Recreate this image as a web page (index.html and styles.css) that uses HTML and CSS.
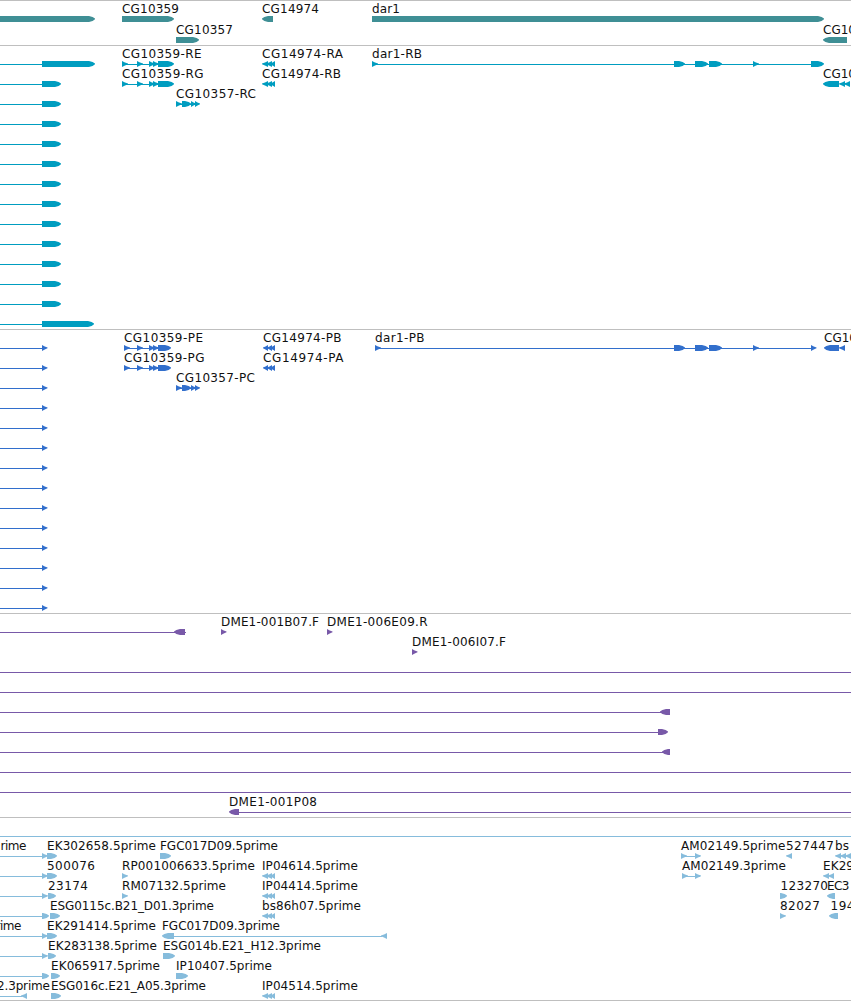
FILE: index.html
```html
<!DOCTYPE html>
<html lang="en">
<head>
    <meta charset="UTF-8">
    <title>Genome browser</title>
    <link rel="stylesheet" href="styles.css">
</head>
<body>
    <main class="browser">
        <section class="track track-genes"><svg id="genes"></svg></section>
        <section class="track track-transcripts"><svg id="transcripts"></svg></section>
        <section class="track track-proteins"><svg id="proteins"></svg></section>
        <section class="track track-clones"><svg id="clones"></svg></section>
        <section class="track track-ests"><svg id="ests"></svg></section>
    </main>
    <script src="tracks.js"></script>
</body>
</html>
```
FILE: styles.css
```css
* {
    box-sizing: border-box;
    margin: 0;
    padding: 0;
}

body {
    background-color: #fff;
    font-family: "DejaVu Sans", sans-serif;
    font-size: 12px;
    overflow: hidden;
}

.browser {
    display: flex;
    flex-direction: column;
    width: 851px;
    border-bottom: 1px solid #bfbfbf;
}

.track {
    border-top: 1px solid #bfbfbf;
    overflow: hidden;
}

.track svg {
    display: block;
    width: 100%;
    height: 100%;
}

.track text {
    fill: #111;
}

.track-genes {
    height: 45px;
    color: #3f8f95;
}

.track-transcripts {
    height: 284px;
    color: #009dc0;
}

.track-proteins {
    height: 284px;
    color: #326fcc;
}

.track-clones {
    height: 204px;
    color: #7859a8;
}

.track-ests {
    height: 183px;
    color: #86bcdc;
}

.line,
.feature {
    fill: currentColor;
}
```
FILE: tracks.js
```js
const NS = 'http://www.w3.org/2000/svg';

function add(svg, tag, attrs, text) {
    const el = document.createElementNS(NS, tag);
    for (const key in attrs) el.setAttribute(key, attrs[key]);
    if (text) el.textContent = text;
    svg.appendChild(el);
}

// feature: [start, end, strand], strand '-' points left
function drawFeature(svg, y, [a, b, strand]) {
    const small = b - a <= 6;
    const head = small ? b - a : 6;
    // wider features get a blunter head
    const bulge = small ? 1.6 : 2;
    const knee = small ? head * 0.5 : head * 0.4;
    const top = y - 3, bottom = y + 3, tip = y - 0.2;
    const dir = strand === '-' ? -1 : 1;
    const back = dir === 1 ? a : b;
    const front = dir === 1 ? b : a;
    const points = [
        [back, top],
        [front - dir * head, top],
        [front - dir * knee, y - bulge],
        [front, tip - 0.4],
        [front, tip + 0.4],
        [front - dir * knee, y + bulge],
        [front - dir * head, bottom],
        [back, bottom]
    ];
    add(svg, 'polygon', { class: 'feature', points: points.map(p => p.join(',')).join(' ') });
}

function drawRow(svg, y, row) {
    (row.lines || []).forEach(([a, b]) =>
        add(svg, 'rect', { class: 'line', x: a, y: y, width: b - a, height: 1 }));
    (row.features || []).forEach(f => drawFeature(svg, y, f));
    // label: [x, text, width]
    (row.labels || []).forEach(([x, text, width]) =>
        add(svg, 'text', { x: x, y: y - 6, textLength: width }, text));
}

function drawTrack(id, first, step, rows) {
    const svg = document.getElementById(id);
    rows.forEach((row, i) => drawRow(svg, first + i * step, row));
}

const full = [0, 851];

drawTrack('genes', 18, 21, [
    {
        features: [[0, 95], [122, 174], [262, 273, '-'], [372, 824]],
        labels: [[122, 'CG10359', 57], [262, 'CG14974', 57], [372, 'dar1', 28]]
    },
    {
        features: [[176, 199], [823, 847, '-']],
        labels: [[176, 'CG10357', 57], [823, 'CG10', 33]]
    }
]);

const cg10359 = [[122, 128], [137, 143], [149, 155], [153, 159], [158, 174]];
const cg10357 = [[176, 182], [182, 191], [191, 196], [195, 200]];
const cg14974 = [[262, 268, '-'], [266, 272, '-'], [270, 275, '-']];
const dar1 = [[674, 685], [695, 708], [709, 722], [753, 759]];

const transcripts = [];
for (let i = 0; i < 14; i++) {
    const end = i === 0 ? 95 : i === 13 ? 94 : 61;
    transcripts.push({ lines: [[0, 42]], features: [[42, end]], labels: [] });
}
transcripts[0].lines.push([122, 158], [372, 811]);
transcripts[0].features.push(...cg10359, ...cg14974, [372, 378], ...dar1, [811, 824]);
transcripts[0].labels.push([122, 'CG10359-RE', 79.5], [262, 'CG14974-RA', 81], [372, 'dar1-RB', 50]);
transcripts[1].lines.push([122, 158]);
transcripts[1].features.push(...cg10359, ...cg14974, [823, 839, '-'], [839, 845, '-'], [844, 850, '-']);
transcripts[1].labels.push([122, 'CG10359-RG', 81.5], [262, 'CG14974-RB', 79], [823, 'CG10', 33]);
transcripts[2].lines.push([176, 198]);
transcripts[2].features.push(...cg10357);
transcripts[2].labels.push([176, 'CG10357-RC', 80]);
drawTrack('transcripts', 18, 20, transcripts);

const cg10359p = [[124, 130], [137, 143], [149, 155], [153, 159], [158, 171]];
const cg14974p = [[263, 268, '-'], [267, 272, '-'], [270, 275, '-']];

const proteins = [];
for (let i = 0; i < 14; i++) {
    proteins.push({ lines: [[0, 42]], features: [[42, 47.5]], labels: [] });
}
proteins[0].lines.push([124, 158], [375, 811]);
proteins[0].features.push(...cg10359p, ...cg14974p, [375, 381], ...dar1, [811, 816.5], [824, 839, '-'], [839, 845, '-']);
proteins[0].labels.push([124, 'CG10359-PE', 79], [263, 'CG14974-PB', 78.5], [375, 'dar1-PB', 49.5], [824, 'CG10', 33]);
proteins[1].lines.push([124, 158]);
proteins[1].features.push(...cg10359p, ...cg14974p);
proteins[1].labels.push([124, 'CG10359-PG', 80.5], [263, 'CG14974-PA', 80.5]);
proteins[2].lines.push([176, 198]);
proteins[2].features.push(...cg10357);
proteins[2].labels.push([176, 'CG10357-PC', 79]);
drawTrack('proteins', 18, 20, proteins);

drawTrack('clones', 18, 20, [
    {
        lines: [[0, 186]],
        features: [[174, 185, '-'], [221, 226.5], [327, 332.5]],
        labels: [[221, 'DME1-001B07.F', 98], [327, 'DME1-006E09.R', 100.5]]
    },
    { features: [[412, 417.5]], labels: [[412, 'DME1-006I07.F', 94]] },
    { lines: [full] },
    { lines: [full] },
    { lines: [[0, 662]], features: [[660, 670, '-']] },
    { lines: [[0, 658]], features: [[658, 668]] },
    { lines: [[0, 664]], features: [[662, 670, '-']] },
    { lines: [full] },
    { lines: [full] },
    { lines: [[239, 851]], features: [[229, 239, '-']], labels: [[229, 'DME1-001P08', 88]] }
]);

const ip = [[262, 268, '-'], [266, 272, '-'], [270, 275, '-']];

drawTrack('ests', 18, 20, [
    { lines: [full] },
    {
        lines: [[0, 42], [681, 700]],
        features: [[42, 48], [47, 57], [160, 171], [681, 687], [695, 701], [786, 792, '-'],
            [835, 841, '-'], [840, 846, '-'], [845, 851, '-']],
        labels: [[0.5, 'rime', 26], [47, 'EK302658.5prime', 109], [160, 'FGC017D09.5prime', 118],
            [681, 'AM02149.5prime', 104.5], [786, '527447', 48], [835, 'bs', 14]]
    },
    {
        lines: [[0, 42], [682, 700]],
        features: [[42, 48], [47, 57], [122, 128], ...ip, [682, 688], [695, 701],
            [823, 829, '-'], [828, 834, '-']],
        labels: [[47, '500076', 48], [122, 'RP001006633.5prime', 133], [262, 'IP04614.5prime', 96],
            [682, 'AM02149.3prime', 104], [823, 'EK29', 31]]
    },
    {
        lines: [[0, 42]],
        features: [[42, 48], [48, 56], [122, 128], ...ip, [780, 787], [827, 835, '-']],
        labels: [[48, '23174', 40], [122, 'RM07132.5prime', 104], [262, 'IP04414.5prime', 96],
            [780.5, '123270', 47.5], [827, 'EC3', 22.5]]
    },
    {
        lines: [[0, 42]],
        features: [[42, 49], [50, 60], ...ip, [780, 786], [829, 838, '-']],
        labels: [[50, 'ESG0115c.B21_D01.3prime', 164], [262, 'bs86h07.5prime', 99],
            [780, '82027', 40], [830.5, '194', 24]]
    },
    {
        lines: [[0, 42], [174, 382]],
        features: [[42, 48], [47, 57], [162, 174, '-'], [381, 387, '-']],
        labels: [[-4.5, 'rime', 26], [47, 'EK291414.5prime', 109], [162, 'FGC017D09.3prime', 118]]
    },
    {
        lines: [[0, 42]],
        features: [[42, 48], [48, 56], [163, 175]],
        labels: [[48, 'EK283138.5prime', 109], [163, 'ESG014b.E21_H12.3prime', 158]]
    },
    {
        lines: [[0, 42]],
        features: [[42, 49], [51, 60], [176, 188]],
        labels: [[51, 'EK065917.5prime', 109], [176, 'IP10407.5prime', 96]]
    },
    {
        lines: [[0, 22]],
        features: [[21, 27, '-'], [51, 61], ...ip],
        labels: [[-3, '2.3prime', 53], [51, 'ESG016c.E21_A05.3prime', 155], [262, 'IP04514.5prime', 96]]
    }
]);
```
